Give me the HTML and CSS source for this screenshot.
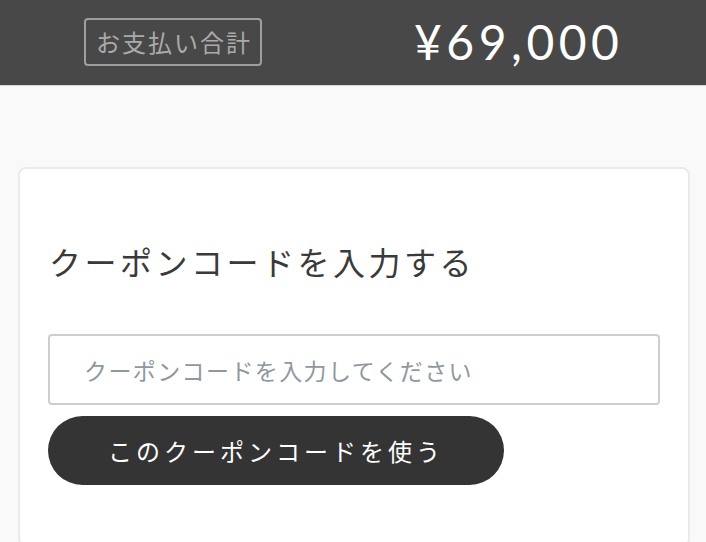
FILE: index.html
```html
<!DOCTYPE html>
<html lang="ja">
    <head>
        <meta charset="UTF-8">
        <title>クーポンコード</title>
        <link rel="stylesheet" href="styles.css">
    </head>
    <body>
        <!-- Total amount bar -->
        <div id="total-bar">
            <span id="total-label">お支払い合計</span>
            <span id="total-price">¥69,000</span>
        </div>

        <!-- Coupon form -->
        <div id="coupon-card">
            <h2 id="coupon-title">クーポンコードを入力する</h2>
            <input id="coupon-code" type="text" placeholder="クーポンコードを入力してください">
            <input id="coupon-submit" type="button" value="このクーポンコードを使う">
        </div>
    </body>
</html>
```

FILE: styles.css
```css
* {
    margin: 0;
    padding: 0;
    box-sizing: border-box;
}

body {
    font: 16px "Noto Sans CJK JP", sans-serif;
    color: rgb(58, 58, 58);
    background-color: rgb(249, 249, 249);
}

#total-bar {
    display: flex;
    flex-direction: row;
    align-items: center;
    height: 86px;
    padding-left: 84px;
    padding-bottom: 2px;
    gap: 152px;
    background-color: rgb(72, 72, 72);
    border-bottom: 1px solid rgb(214, 214, 214);
}

#total-label {
    display: flex;
    align-items: center;
    justify-content: center;
    width: 178px;
    height: 48px;
    padding-left: 2px;
    font-size: 24px;
    letter-spacing: 2px;
    color: rgb(170, 170, 170);
    border: 2px solid rgb(158, 158, 158);
    border-radius: 4px;
}

#total-price {
    font: 48px "Lato", sans-serif;
    letter-spacing: 4.5px;
    color: white;
}

#coupon-card {
    display: flex;
    flex-direction: column;
    align-items: flex-start;
    margin: 81px 16px 0 18px;
    padding: 68px 28px 60px 28px;
    background-color: white;
    border: 2px solid rgb(234, 234, 234);
    border-radius: 8px;
}

#coupon-title {
    font-size: 32px;
    font-weight: normal;
    line-height: 48px;
    letter-spacing: 3.5px;
    margin-left: 1px;
    margin-bottom: 49px;
}

#coupon-code {
    width: 100%;
    height: 71px;
    padding-left: 34px;
    font: 23px "Noto Sans CJK JP", sans-serif;
    letter-spacing: 1.4px;
    color: rgb(58, 58, 58);
    border: 2px solid rgb(206, 206, 206);
    border-radius: 4px;
}

#coupon-code::placeholder {
    color: rgb(143, 152, 160);
}

#coupon-code:focus {
    outline: none;
}

#coupon-submit {
    width: 456px;
    height: 69px;
    margin-top: 11px;
    font: 24px "Noto Sans CJK JP", sans-serif;
    letter-spacing: 4px;
    color: white;
    background-color: rgb(52, 52, 52);
    border: none;
    border-radius: 35px;
}

#coupon-submit:hover {
    cursor: pointer;
}
```
